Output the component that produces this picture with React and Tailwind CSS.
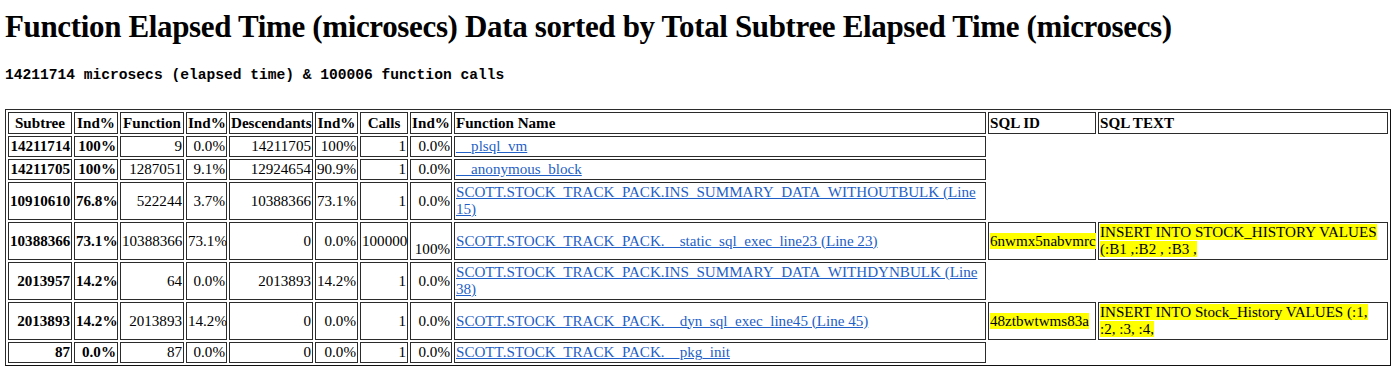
const HEADERS = [
  { label: 'Subtree', w: 'w-[64px]', align: 'text-center' },
  { label: 'Ind%', w: 'w-[44px]', align: 'text-center' },
  { label: 'Function', w: 'w-[64px]', align: 'text-center' },
  { label: 'Ind%', w: 'w-[41px]', align: 'text-center' },
  { label: 'Descendants', w: 'w-[84px]', align: 'text-center' },
  { label: 'Ind%', w: 'w-[43px]', align: 'text-center' },
  { label: 'Calls', w: 'w-[48px]', align: 'text-center' },
  { label: 'Ind%', w: 'w-[42px]', align: 'text-center' },
  { label: 'Function Name', w: 'w-[532px]', align: 'text-left' },
  { label: 'SQL ID', w: 'w-[108px]', align: 'text-left' },
  { label: 'SQL TEXT', w: 'w-[290px]', align: 'text-left' },
]

const ROWS = [
  {
    nums: ['14211714', '100%', '9', '0.0%', '14211705', '100%', '1', '0.0%'],
    name: '__plsql_vm',
  },
  {
    nums: ['14211705', '100%', '1287051', '9.1%', '12924654', '90.9%', '1', '0.0%'],
    name: '__anonymous_block',
  },
  {
    nums: ['10910610', '76.8%', '522244', '3.7%', '10388366', '73.1%', '1', '0.0%'],
    name: 'SCOTT.STOCK_TRACK_PACK.INS_SUMMARY_DATA_WITHOUTBULK (Line 15)',
  },
  {
    nums: ['10388366', '73.1%', '10388366', '73.1%', '0', '0.0%', '100000', '100%'],
    name: 'SCOTT.STOCK_TRACK_PACK.__static_sql_exec_line23 (Line 23)',
    sqlId: '6nwmx5nabvmrc',
    sqlText: 'INSERT INTO STOCK_HISTORY VALUES (:B1 ,:B2 , :B3 ,',
    lastBottom: true,
  },
  {
    nums: ['2013957', '14.2%', '64', '0.0%', '2013893', '14.2%', '1', '0.0%'],
    name: 'SCOTT.STOCK_TRACK_PACK.INS_SUMMARY_DATA_WITHDYNBULK (Line 38)',
  },
  {
    nums: ['2013893', '14.2%', '2013893', '14.2%', '0', '0.0%', '1', '0.0%'],
    name: 'SCOTT.STOCK_TRACK_PACK.__dyn_sql_exec_line45 (Line 45)',
    sqlId: '48ztbwtwms83a',
    sqlText: 'INSERT INTO Stock_History VALUES (:1, :2, :3, :4,',
  },
  {
    nums: ['87', '0.0%', '87', '0.0%', '0', '0.0%', '1', '0.0%'],
    name: 'SCOTT.STOCK_TRACK_PACK.__pkg_init',
  },
]

const cell = 'border border-[#2b2b2b] px-px py-px'

export default function App() {
  return (
    <div className="bg-white min-h-[368px] pl-[5px] pr-[5px] text-black">
      <h1 className="text-[31px] font-bold leading-[37px] pt-[8px] tracking-[-0.35px] font-['Liberation_Serif','DejaVu_Serif',serif]">
        Function Elapsed Time (microsecs) Data sorted by Total Subtree Elapsed Time (microsecs)
      </h1>
      <p className="mt-[22px] text-[14.6px] font-bold leading-[17px] font-['Liberation_Mono','Courier_New',monospace]">
        14211714 microsecs (elapsed time) &amp; 100006 function calls
      </p>
      <table className="mt-[25px] w-[1386px] table-fixed border-separate border-spacing-[2px] border border-[#2b2b2b] border-r-[#111] border-b-[#111] text-[15.1px] leading-[17px] font-['Liberation_Serif','DejaVu_Serif',serif]">
        <thead>
          <tr>
            {HEADERS.map((h, i) => (
              <th key={i} className={`${cell} ${h.w} ${h.align} font-bold leading-[18px]`}>
                {h.label}
              </th>
            ))}
          </tr>
        </thead>
        <tbody>
          {ROWS.map((r, ri) => (
            <tr key={ri}>
              {r.nums.map((n, i) => (
                <td
                  key={i}
                  className={`${cell} text-right ${i < 2 ? 'font-bold' : ''} ${
                    i === 7 && r.lastBottom ? 'align-bottom' : 'align-middle'
                  }`}
                >
                  {n}
                </td>
              ))}
              <td className={`${cell} text-left align-middle`}>
                <a href="#" className="text-[#1f5fc6] underline">
                  {r.name}
                </a>
              </td>
              {r.sqlId && (
                <td className={`${cell} text-left align-middle`}>
                  <span className="bg-[#ffff00]">{r.sqlId}</span>
                </td>
              )}
              {r.sqlText && (
                <td className={`${cell} pr-[6px] text-left align-middle`}>
                  <span className="bg-[#ffff00]">{r.sqlText}</span>
                </td>
              )}
            </tr>
          ))}
        </tbody>
      </table>
    </div>
  )
}
